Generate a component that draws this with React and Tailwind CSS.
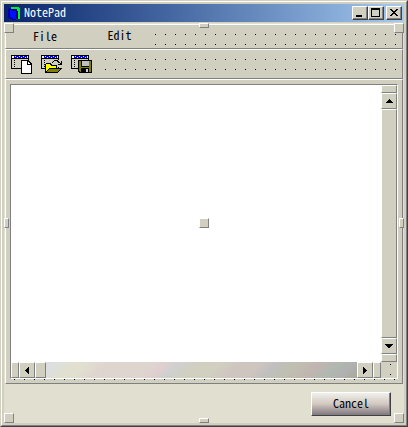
import { useState } from 'react';
import clsx from 'clsx';

const raised = 'border border-t-white border-l-white border-r-[#808080] border-b-[#808080]';
const dots = 'bg-[conic-gradient(from_270deg_at_1px_1px,#000_90deg,transparent_0)] bg-[length:10px_10px]';

// Resize handles around the form
const HANDLES = [
  'left-0 top-0 size-[10px]',
  'left-1/2 -ml-[5px] top-0 w-[10px] h-[5px]',
  'right-0 top-0 size-[10px]',
  'left-0 top-1/2 -mt-[5px] w-[5px] h-[10px]',
  'left-1/2 -ml-[5px] top-1/2 -mt-[5px] size-[10px]',
  'right-0 top-1/2 -mt-[5px] w-[5px] h-[10px]',
  'left-0 bottom-0 size-[10px]',
  'left-1/2 -ml-[5px] bottom-0 w-[10px] h-[5px]',
  'right-0 bottom-0 size-[10px]',
];

function AppIcon() {
  return (
    <svg width="12" height="15" viewBox="0 0 12 15" shapeRendering="crispEdges">
      <path d="M3 1h8v1h1v11h-2v-1H9V4H3z" fill="#00f020" />
      <path d="M0 3h1V2h2v1h6v9H8v2H4v-1H2v-1H0z" fill="#0000a0" />
      <path d="M2 4h2v1h4v8H5v-1H3v-1H2z" fill="#0010ff" />
      <path d="M9 5h1v8H9z" fill="#000040" />
    </svg>
  );
}

function ToolIcon({ children }) {
  return (
    <svg width="22" height="19" viewBox="0 0 22 19" shapeRendering="crispEdges">
      <path d="M0 0h18v14H0z" fill="#000" />
      <path d="M1 1h16v2H1z" fill="#fff" />
      <path d="M1 4h16v9H1z" fill="#d1cfc0" />
      <path d="M3 1h13v2H3z" fill="#0000ff" />
      <path d="M4 1h1v1H4zM6 2h1v1H6zM8 1h1v1H8zM10 2h1v1h-1zM12 1h1v1h-1zM14 2h1v1h-1z" fill="#fff" />
      <path d="M3 5h1v1H3zM3 7h1v1H3zM3 9h1v1H3zM3 11h1v1H3z" fill="#000" />
      {children}
    </svg>
  );
}

function NewIcon() {
  return (
    <ToolIcon>
      <path d="M10 5h8v1h1v1h1v1h1v11H10z" fill="#000" />
      <path d="M11 6h5v4h4v8h-9z" fill="#fff" />
      <path d="M17 7h1v1h1v1h-2z" fill="#fff" />
    </ToolIcon>
  );
}

function OpenIcon() {
  return (
    <ToolIcon>
      <path d="M9 5h12v7H9z" fill="#d1cfc0" />
      <path d="M4 9h1V8h5v1h1v1h5v3h5v1h-1v1h-1v1h-1v1h-1v1H4z" fill="#000" />
      <path d="M5 9h4v1h1v1h5v2H8v1H7v1H6v1H5z" fill="#ffff00" />
      <path d="M8 14h11v1h-1v1h-1v1H6v-1h1v-1h1z" fill="#808000" />
      <path d="M11 7h1V6h1V5h4v1h1v1h1v1h-2V7h-1V6h-3v1h-1v1h-1zM20 6h1v4h-4V9h2V8h1z" fill="#000" />
    </ToolIcon>
  );
}

function SaveIcon() {
  return (
    <ToolIcon>
      <path d="M7 5h14v13H8v-1H7z" fill="#000" />
      <path d="M8 6h12v11H9v-1H8z" fill="#808000" />
      <path d="M10 5h8v7h-8z" fill="#000" />
      <path d="M11 6h7v5h-7z" fill="#c0c0c0" />
      <path d="M10 13h8v4h-8z" fill="#000" />
      <path d="M15 14h2v3h-2z" fill="#d0d0d0" />
    </ToolIcon>
  );
}

function Arrow({ d, size }) {
  const [w, h] = size.split(' ');
  return (
    <svg width={w} height={h} viewBox={`0 0 ${size}`} shapeRendering="crispEdges">
      <path d={d} />
    </svg>
  );
}

function CaptionButton({ label, className, children }) {
  return (
    <button
      aria-label={label}
      className={clsx(
        'w-4 h-[14px] bg-[#d1cfc0] border border-t-white border-l-white border-r-[#404040] border-b-[#404040] shadow-[inset_-1px_-1px_#808080] flex items-center justify-center',
        className
      )}
    >
      {children}
    </button>
  );
}

function ScrollButton({ label, children }) {
  return (
    <button aria-label={label} className={clsx(raised, 'size-4 shrink-0 bg-[#d1cfc0] flex items-center justify-center')}>
      {children}
    </button>
  );
}

export default function App() {
  const [text, setText] = useState('');

  return (
    <div className="h-screen flex flex-col bg-[#d1cfc0] border border-t-[#d1cfc0] border-l-[#d1cfc0] border-r-[#404040] border-b-[#404040] font-['Noto_Sans_Mono_CJK_JP','Liberation_Mono',monospace] text-[12px] leading-[14px] text-black">
      <div className={clsx(raised, 'flex-1 min-h-0 flex flex-col p-[2px]')}>
        <header className="h-[18px] shrink-0 flex items-center pl-1 pr-[2px] bg-linear-to-r from-[#0a246a] to-[#a6caf0]">
          <AppIcon />
          <h1 className="flex-1 pl-1 pb-[2px] text-white">NotePad</h1>
          <CaptionButton label="Minimize">
            <svg width="10" height="10" viewBox="0 0 10 10" shapeRendering="crispEdges">
              <path d="M1 7h6v2H1z" />
            </svg>
          </CaptionButton>
          <CaptionButton label="Maximize">
            <svg width="10" height="10" viewBox="0 0 10 10" shapeRendering="crispEdges">
              <path d="M0 0h9v9H0zM1 2v6h7V2z" fillRule="evenodd" />
            </svg>
          </CaptionButton>
          <CaptionButton label="Close" className="ml-[2px]">
            <svg width="10" height="10" viewBox="0 0 10 10" shapeRendering="crispEdges">
              <path d="M1 1h2v1h1v1h2V2h1V1h2v1H8v1H7v1H6v1h1v1h1v1h1v1H7V7H6V6H4v1H3v1H1V7h1V6h1V5h1V4H3V3H2V2H1z" />
            </svg>
          </CaptionButton>
        </header>

        <main className="relative flex-1 min-h-0 mt-px p-px pb-0 flex flex-col bg-[#e0dfd0]">
          <nav className={clsx(raised, 'h-[25px] shrink-0 flex items-start bg-[#d1cfc0]')}>
            <button className="w-[74px] pt-1 pl-1">File</button>
            <button className="w-[75px] pt-[3px] pl-1">Edit</button>
            <div className={clsx(dots, 'flex-1 self-stretch mt-[9px] mb-[3px]')} />
          </nav>

          <div role="toolbar" className={clsx(raised, 'h-[30px] shrink-0 flex bg-[#d1cfc0]')}>
            <div className="flex items-start gap-2 pl-[5px] pr-3 pt-[5px]">
              <button aria-label="New"><NewIcon /></button>
              <button aria-label="Open"><OpenIcon /></button>
              <button aria-label="Save"><SaveIcon /></button>
            </div>
            <div className={clsx(dots, 'flex-1 mt-[9px] mb-2')} />
          </div>

          <section className={clsx(raised, 'flex-1 min-h-0 flex flex-col px-1 pt-1 bg-[#d1cfc0]')}>
            <div className="flex-1 min-h-0 grid grid-cols-[1fr_16px] grid-rows-[1fr_16px] border border-t-[#808080] border-l-[#808080] border-r-white border-b-white">
              <textarea
                aria-label="Document"
                value={text}
                onChange={(e) => setText(e.target.value)}
                className="block size-full bg-white resize-none outline-none p-1"
              />
              <div className="flex flex-col">
                <div className={clsx(raised, 'h-2')} />
                <ScrollButton label="Scroll up">
                  <Arrow size="7 4" d="M3 0h1v1h1v1h1v1h1v1H0V3h1V2h1V1h1z" />
                </ScrollButton>
                <div className={clsx(raised, 'flex-1')} />
                <ScrollButton label="Scroll down">
                  <Arrow size="8 4" d="M0 0h8v1H7v1H6v1H5v1H3V3H2V2H1V1H0z" />
                </ScrollButton>
                <div className={clsx(raised, 'h-2')} />
              </div>
              <div className="flex">
                <div className={clsx(raised, 'w-2')} />
                <ScrollButton label="Scroll left">
                  <Arrow size="4 7" d="M4 0v7H3V6H2V5H1V4H0V3h1V2h1V1h1V0z" />
                </ScrollButton>
                <div className={clsx(raised, 'w-[11px]')} />
                <div className="flex-1 bg-[linear-gradient(135deg,#dddde0_0%,#dddfdf_4%,#e0dfd0_8%,#e0dfd0_13%,#dfd5cf_19%,#dfd5cf_32%,#dfcfcf_37%,#cfcfcf_41%,#d0cfc0_47%,#d0cfc0_54%,#cfc5bf_60%,#cfc5bf_66%,#bfbfbf_71%,#c0bfb0_77%,#c0b5b0_84%,#b0b8b0_90%,#b0b0b0_95%,#a8a898_100%)]" />
                <ScrollButton label="Scroll right">
                  <Arrow size="4 7" d="M0 0h1v1h1v1h1v1h1v1H3v1H2v1H1v1H0z" />
                </ScrollButton>
                <div className={clsx(raised, 'w-2')} />
              </div>
              <div className={clsx(dots, 'ml-[9px] mt-[2px]')} />
            </div>
            <div className={clsx(dots, 'h-1 ml-1')} />
          </section>

          <footer className="h-[39px] shrink-0 flex justify-end pt-2 pr-3">
            <button className="w-20 h-6 pb-[2px] border border-t-white border-l-white border-r-[#404040] border-b-[#404040] shadow-[inset_-1px_-1px_#808080] bg-linear-to-b from-[#f0f0ec] via-[#d2c8c0] to-[#807880]">
              Cancel
            </button>
          </footer>

          {HANDLES.map((pos) => (
            <div key={pos} className={clsx(raised, 'absolute bg-[#d1cfc0]', pos)} />
          ))}
        </main>
      </div>
    </div>
  );
}
